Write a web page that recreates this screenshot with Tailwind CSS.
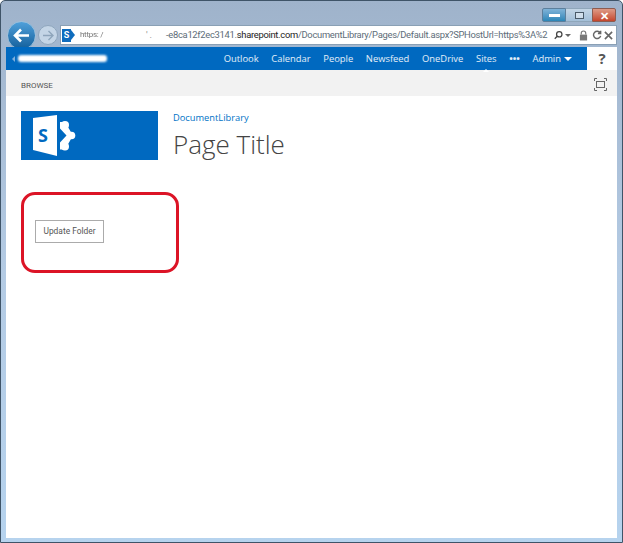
<!DOCTYPE html>
<html lang="en">
<head>
  <meta charset="UTF-8" />
  <title>Page Title</title>
  <script src="https://cdn.jsdelivr.net/npm/@tailwindcss/browser@4"></script>
</head>
<body class="w-[623px] h-[543px] overflow-hidden bg-white font-['Open_Sans',sans-serif]">
  <div class="w-[623px] h-[543px] flex flex-col border border-[#3f5468] rounded-t-[5px] bg-gradient-to-b from-[#9fb3cb] via-[#b4cbe4] to-[#b6d3ee] px-[5px] pb-[4px]">
    <!-- window title bar -->
    <div class="h-[24px] flex justify-end items-start pt-[7px] pr-[1px] shrink-0">
      <div class="w-[24px] h-[14px] rounded-l-[2px] bg-gradient-to-b from-[#7fb3d8] to-[#2a86b8] border border-[#5c7f9c] flex items-center justify-center"><div class="w-[11px] h-[3px] bg-white"></div></div>
      <div class="w-[26px] h-[14px] bg-gradient-to-b from-[#c4d6e6] to-[#a3bfd8] border-y border-[#8fa6ba] flex items-center justify-center"><div class="w-[9px] h-[7px] border border-[#4a5a68] bg-white/40"></div></div>
      <div class="w-[24px] h-[14px] rounded-r-[2px] bg-gradient-to-b from-[#dd9a86] to-[#c4452c] border border-[#8d5c50] flex items-center justify-center text-white text-[11px] font-bold leading-none">✕</div>
    </div>
    <!-- nav row -->
    <div class="h-[20px] flex items-center shrink-0 relative">
      <div class="absolute left-[1px] top-[-4px] w-[29px] h-[29px] rounded-full bg-gradient-to-b from-[#4fa0da] to-[#12609c] border border-[#9cc0dc] flex items-center justify-center">
        <svg width="17" height="15" viewBox="0 0 17 15" fill="none" stroke="#fff" stroke-width="2.6"><path d="M8 1.5 2 7.5l6 6M2.5 7.5H16"/></svg>
      </div>
      <div class="absolute left-[32px] top-[0px] w-[20px] h-[20px] rounded-full bg-[#c4d5e6] border border-[#8fa6bd] flex items-center justify-center">
        <svg width="12" height="11" viewBox="0 0 12 11" fill="none" stroke="#8ea5bb" stroke-width="1.4"><path d="M6.5 1 11 5.5 6.5 10M11 5.5H1"/></svg>
      </div>
      <div class="ml-[54px] flex-1 h-[20px] bg-white border border-[#8aa0b5] flex items-center font-['Roboto',sans-serif] text-[9.4px] tracking-[-0.29px] text-[#5d6c78] leading-none whitespace-nowrap overflow-hidden">
        <div class="ml-[1px] w-[9px] h-[13px] bg-[#0f6cbd] text-white text-[9px] font-bold flex items-center justify-center">S</div>
        <span class="w-0 h-0 border-y-[5px] border-y-transparent border-l-[4px] border-l-[#0f6cbd]"></span>
        <span class="ml-[5px] w-[34px] text-[8px] text-[#777] blur-[0.4px]">https: /</span>
        <span class="ml-[32px] w-[20px] text-[#888]">' .</span>
        <span class="w-[384px] shrink-0"><span>-e8ca12f2ec3141.</span><span class="text-[#222]">sharepoint.com</span><span>/DocumentLibrary/Pages/Default.aspx?SPHostUrl=https%3A%2</span></span>
        <div class="ml-auto flex items-center pr-[3px] bg-white">
          <svg width="9" height="10" viewBox="0 0 12 12" fill="none" stroke="#444" stroke-width="1.7"><circle cx="7" cy="5" r="3.6"/><path d="M4.3 7.7 1 11"/></svg>
          <span class="ml-[2px] w-0 h-0 border-x-[3px] border-x-transparent border-t-[3px] border-t-[#666]"></span>
          <svg class="ml-[8px]" width="9" height="11" viewBox="0 0 10 12"><path d="M2.5 5V3.5a2.5 2.5 0 0 1 5 0V5" fill="none" stroke="#777" stroke-width="1.3"/><rect x="1" y="5" width="8" height="6.5" fill="#777"/></svg>
          <svg class="ml-[4px]" width="10" height="10" viewBox="0 0 11 11" fill="none" stroke="#666" stroke-width="1.6"><path d="M9 3.2A4 4 0 1 0 9.5 6.5M9.5 .8v3H6.5"/></svg>
          <svg class="ml-[2px]" width="9" height="9" viewBox="0 0 10 10" stroke="#666" stroke-width="1.8"><path d="m1 1 8 8M9 1l-8 8"/></svg>
        </div>
      </div>
    </div>
    <!-- page -->
    <div class="mt-[2px] flex-1 bg-white flex flex-col min-h-0">
      <div class="h-[23px] flex shrink-0 bg-white">
        <div class="w-[581px] bg-[#0069c0] flex items-center text-white/90 text-[9.4px] leading-none relative">
          <span class="ml-[6px] w-0 h-0 border-y-[3px] border-y-transparent border-r-[3px] border-r-[#7fb0dc]"></span>
          <div class="ml-[3px] w-[89px] h-[7px] bg-white rounded-[3px] blur-[1px]"></div>
          <nav class="ml-auto flex items-center gap-[12.7px] pr-[15px]">
            <span>Outlook</span>
            <span>Calendar</span>
            <span>People</span>
            <span>Newsfeed</span>
            <span>OneDrive</span>
            <span class="relative">Sites<i class="absolute left-[7px] top-[15px] w-0 h-0 border-x-[3px] border-x-transparent border-b-[3px] border-b-white"></i></span>
            <span class="font-bold">•••</span>
            <span class="flex items-center gap-[3px]">Admin<i class="w-0 h-0 border-x-[4px] border-x-transparent border-t-[4px] border-t-white"></i></span>
          </nav>
        </div>
        <div class="flex-1 flex items-center justify-center text-[15px] font-bold text-[#555] leading-none">?</div>
      </div>
      <div class="h-[26px] bg-[#f2f2f2] shrink-0 flex items-center justify-between pl-[15px] pr-[10px] font-['Roboto',sans-serif] text-[8px] text-[#555]">
        <span class="mt-[6px]">BROWSE</span>
        <svg class="mt-[2px]" width="13" height="13" viewBox="0 0 13 13" fill="none" stroke="#666"><rect x="2.5" y="3.5" width="8" height="6"/><path d="M.5 3V.5H3M10 .5h2.5V3M.5 10v2.5H3M10 12.5h2.5V10"/></svg>
      </div>
      <div class="flex pl-[15px] pt-[15px]">
        <div class="w-[137px] h-[49px] bg-[#0069c0] flex items-center pl-[12px]">
          <svg width="44" height="42" viewBox="0 0 44 42">
            <path d="M0 3 24 0V41L0 35z" fill="#fff"/>
            <text x="5" y="27" font-size="18" font-weight="700" fill="#0069c0" font-family="Open Sans, sans-serif">S</text>
            <path d="M27 7h5l8 13.5-8 14h-5v-7l6.5-7-6.5-7z" fill="#fff"/>
            <circle cx="32" cy="10" r="4" fill="#fff"/>
            <circle cx="38.5" cy="20.5" r="3.8" fill="#fff"/>
            <circle cx="32" cy="31.5" r="4" fill="#fff"/>
          </svg>
        </div>
        <div class="ml-[15px] flex flex-col">
          <a class="text-[9.3px] leading-[14px] text-[#0072c6]">DocumentLibrary</a>
          <h1 class="text-[26px] leading-[34px] font-light text-[#444] mt-[2px]">Page Title</h1>
        </div>
      </div>
      <div class="ml-[15px] mt-[31px] w-[158px] h-[81px] border-[3px] border-[#dc1426] rounded-[14px] pl-[11px] pt-[25px]">
        <button class="w-[69px] h-[23px] border border-[#ababab] bg-white font-['Roboto',sans-serif] text-[8.4px] text-[#555] flex items-center justify-center">Update Folder</button>
      </div>
    </div>
  </div>
</body>
</html>
